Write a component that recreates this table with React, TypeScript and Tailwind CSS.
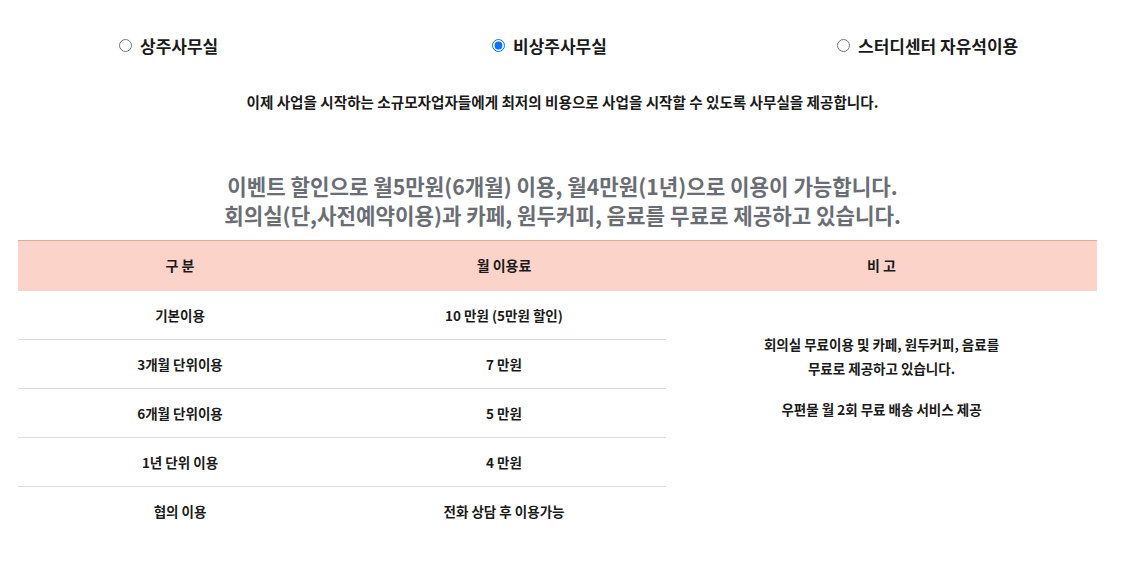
import React from "react";

const font = { fontFamily: '"Noto Sans CJK KR", "Noto Sans", sans-serif' };

const rows = [
  ["기본이용", "10 만원 (5만원 할인)"],
  ["3개월 단위이용", "7 만원"],
  ["6개월 단위이용", "5 만원"],
  ["1년 단위 이용", "4 만원"],
  ["협의 이용", "전화 상담 후 이용가능"],
];

export default function App() {
  return (
    <div className="w-[1125px] h-[576px] bg-white text-[#1a1a1a] overflow-hidden" style={font}>
      <div className="grid grid-cols-[373px_345px_1fr] pl-[119px] pt-[33px] h-[24px] items-center box-content">
        <label className="flex items-center gap-[8px] text-[17px] font-bold leading-none">
          <input type="radio" name="t" readOnly className="m-0 w-[13px] h-[13px]" />
          <span>상주사무실</span>
        </label>
        <label className="flex items-center gap-[8px] text-[17px] font-bold leading-none">
          <input type="radio" name="t" readOnly checked className="m-0 w-[13px] h-[13px]" />
          <span>비상주사무실</span>
        </label>
        <label className="flex items-center gap-[8px] text-[17px] font-bold leading-none">
          <input type="radio" name="t" readOnly className="m-0 w-[13px] h-[13px]" />
          <span>스터디센터 자유석이용</span>
        </label>
      </div>
      <p className="text-center text-[14.6px] font-bold mt-[35px] leading-[20px]">
        이제 사업을 시작하는 소규모자업자들에게 최저의 비용으로 사업을 시작할 수 있도록 사무실을 제공합니다.
      </p>
      <div className="text-center text-[21.2px] font-bold text-[#6a6e74] mt-[59px] leading-[29px]">
        <p>이벤트 할인으로 월5만원(6개월) 이용, 월4만원(1년)으로 이용이 가능합니다.</p>
        <p>회의실(단,사전예약이용)과 카페, 원두커피, 음료를 무료로 제공하고 있습니다.</p>
      </div>
      <div className="mx-[18px] mt-[11px] w-[1079px]">
        <div className="grid grid-cols-[324px_324px_431px] h-[51px] bg-[#fbd3c9] border-t border-[#e9a897] border-b border-b-[#e3dcda] text-[14px] font-bold items-center text-center">
          <div>구 분</div>
          <div>월 이용료</div>
          <div>비 고</div>
        </div>
        <div className="flex">
          <div className="w-[648px]">
            {rows.map((r, i) => (
              <div
                key={i}
                className={
                  "grid grid-cols-[324px_324px] h-[49px] items-center text-center text-[13.5px] font-bold " +
                  (i < rows.length - 1 ? "border-b border-[#dcdcdc]" : "")
                }
              >
                <div>{r[0]}</div>
                <div>{r[1]}</div>
              </div>
            ))}
          </div>
          <div className="w-[431px] text-center text-[13.5px] font-bold pt-[41px] leading-[24px]">
            <p>회의실 무료이용 및 카페, 원두커피, 음료를</p>
            <p>무료로 제공하고 있습니다.</p>
            <p className="mt-[17px]">우편물 월 2회 무료 배송 서비스 제공</p>
          </div>
        </div>
      </div>
    </div>
  );
}
